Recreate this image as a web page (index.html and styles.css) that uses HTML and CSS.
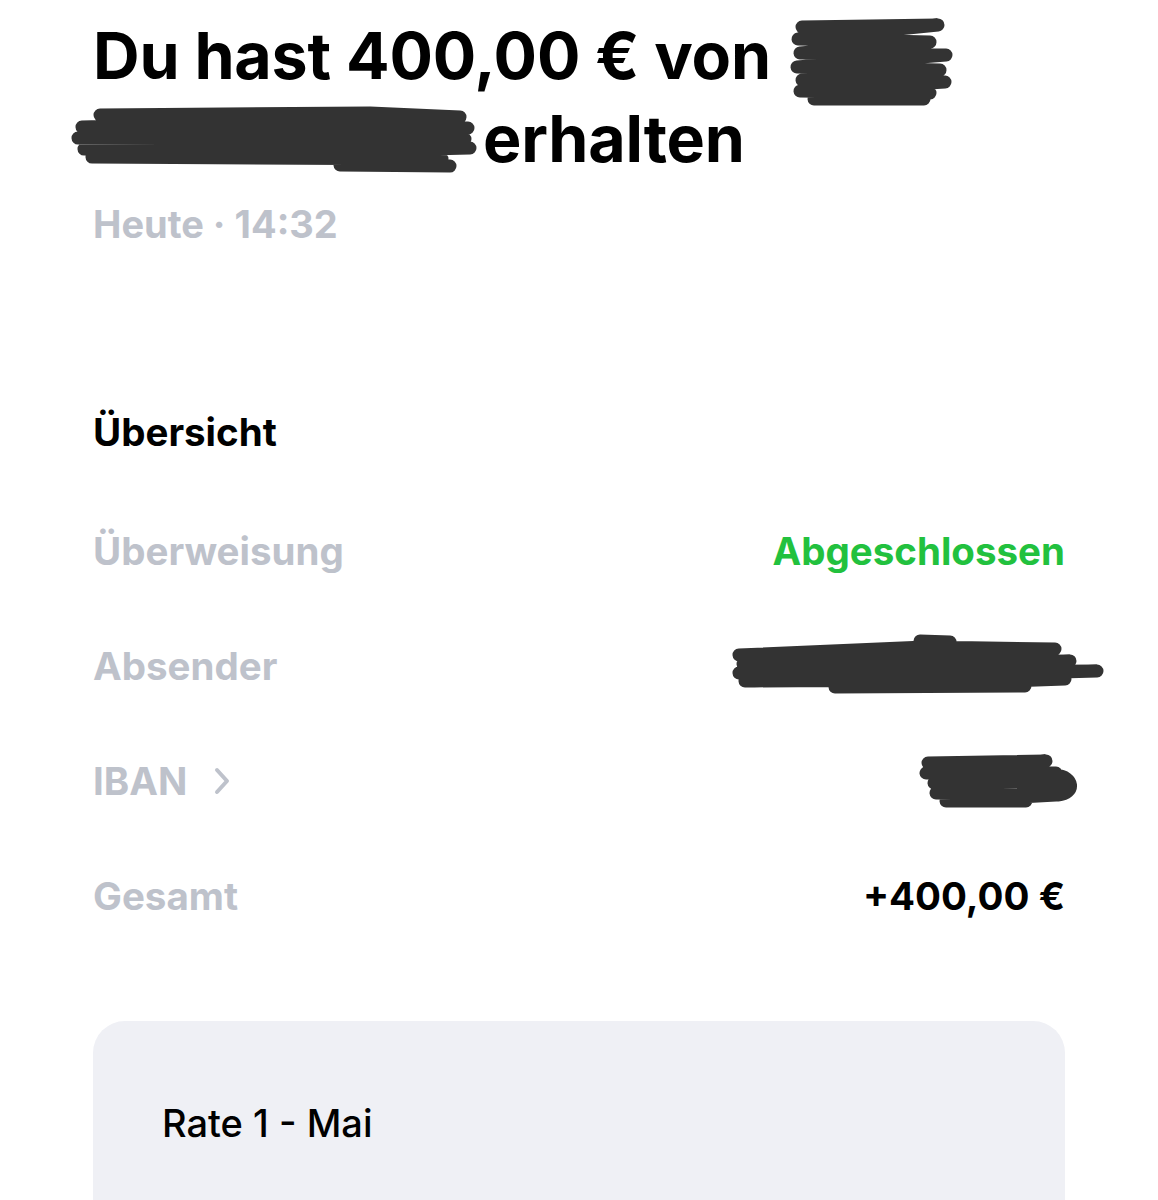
FILE: index.html
```html
<!DOCTYPE html>
<html lang="de">
<head>
    <meta charset="UTF-8">
    <meta name="viewport" content="width=device-width, initial-scale=1.0">
    <title>Überweisung</title>
    <link rel="stylesheet" href="styles.css">
</head>
<body>
    <div class="page">
        <h1 class="title">Du hast 400,00 € von <span class="redact redact-top"><svg width="170" height="95" viewBox="0 0 170 95"><path d="M14 12 L150 10 L10 24 L142 27 L12 38 L158 40 L9 52 L152 55 L14 65 L157 67 L12 76 L142 78 L26 84 L136 84"/></svg></span><br><span class="redact redact-left"><svg width="410" height="80" viewBox="0 0 410 80"><path d="M30 14 L300 12 L390 16 L12 26 L398 27 L8 37 L395 38 L14 48 L400 47 L22 56 L372 58 L270 64 L380 65"/></svg></span>erhalten</h1>
        <div class="date">Heute · 14:32</div>

        <h2 class="section">Übersicht</h2>

        <div class="rows">
            <div class="row">
                <span class="label">Überweisung</span>
                <span class="value done">Abgeschlossen</span>
            </div>
            <div class="row">
                <span class="label">Absender</span>
                <svg class="scribble" width="380" height="70" viewBox="0 0 380 70"><path d="M14 24 L200 16 L330 18 L18 33 L345 30 L14 42 L372 40 L20 50 L340 48 L110 56 L300 55 M195 10 L225 11"/></svg>
            </div>
            <div class="row">
                <span class="label">IBAN <svg class="chevron" width="22" height="30" viewBox="0 0 22 30"><path d="M6 4 L16 15 L6 26"/></svg></span>
                <svg class="scribble" width="165" height="60" viewBox="0 0 165 60"><path d="M12 12 L130 10 L10 22 L140 22 L18 32 L150 30 L20 42 L140 44 L30 50 L110 50 M140 24 C158 26 160 42 142 44"/></svg>
            </div>
            <div class="row">
                <span class="label">Gesamt</span>
                <span class="value">+400,00 €</span>
            </div>
        </div>

        <div class="card">
            <div class="card-title">Rate 1 - Mai</div>
        </div>
    </div>
</body>
</html>
```

FILE: styles.css
```css
body {
    margin: 0;
    background-color: #fff;
    font-family: Inter, "Noto Sans", sans-serif;
    color: #000;
    overflow: hidden;
}

.page {
    padding: 15px 93px 0 93px;
}

.title {
    margin: 0;
    font-size: 64.5px;
    line-height: 83px;
    font-weight: 700;
    letter-spacing: -0.2px;
}

.redact {
    position: relative;
    display: inline-block;
    height: 1px;
}

.redact svg {
    position: absolute;
    left: 0;
}

.redact path,
.scribble path {
    fill: none;
    stroke: #333;
    stroke-width: 13;
    stroke-linecap: round;
    stroke-linejoin: round;
}

.redact-top {
    width: 160px;
}

.redact-top svg {
    top: -63px;
    left: 2px;
}

.redact-left {
    width: 413px;
    margin-left: -23px;
}

.redact-left svg {
    top: -60px;
}

.date {
    margin-top: 21px;
    font-size: 38px;
    line-height: 44px;
    font-weight: 700;
    color: #bec2cb;
}

.section {
    margin: 164px 0 0 0;
    font-size: 38.5px;
    line-height: 44px;
    font-weight: 700;
}

.rows {
    margin-top: 39px;
}

.row {
    display: flex;
    justify-content: space-between;
    align-items: center;
    height: 115px;
    font-size: 38.5px;
    font-weight: 700;
}

.label {
    color: #bec2cb;
    display: flex;
    align-items: center;
}

.chevron {
    margin-left: 24px;
}

.chevron path {
    fill: none;
    stroke: #bec2cb;
    stroke-width: 4;
    stroke-linecap: round;
    stroke-linejoin: round;
}

.value {
    color: #000;
}

.done {
    color: #22c13e;
}

.row .scribble {
    margin-right: -40px;
}

.row:nth-child(3) .scribble {
    margin-right: -16px;
}

.card {
    margin-top: 68px;
    height: 300px;
    background-color: #eff0f5;
    border-radius: 32px;
    padding: 80px 69px 0 69px;
}

.card-title {
    font-size: 38px;
    line-height: 44px;
    font-weight: 500;
}
```
